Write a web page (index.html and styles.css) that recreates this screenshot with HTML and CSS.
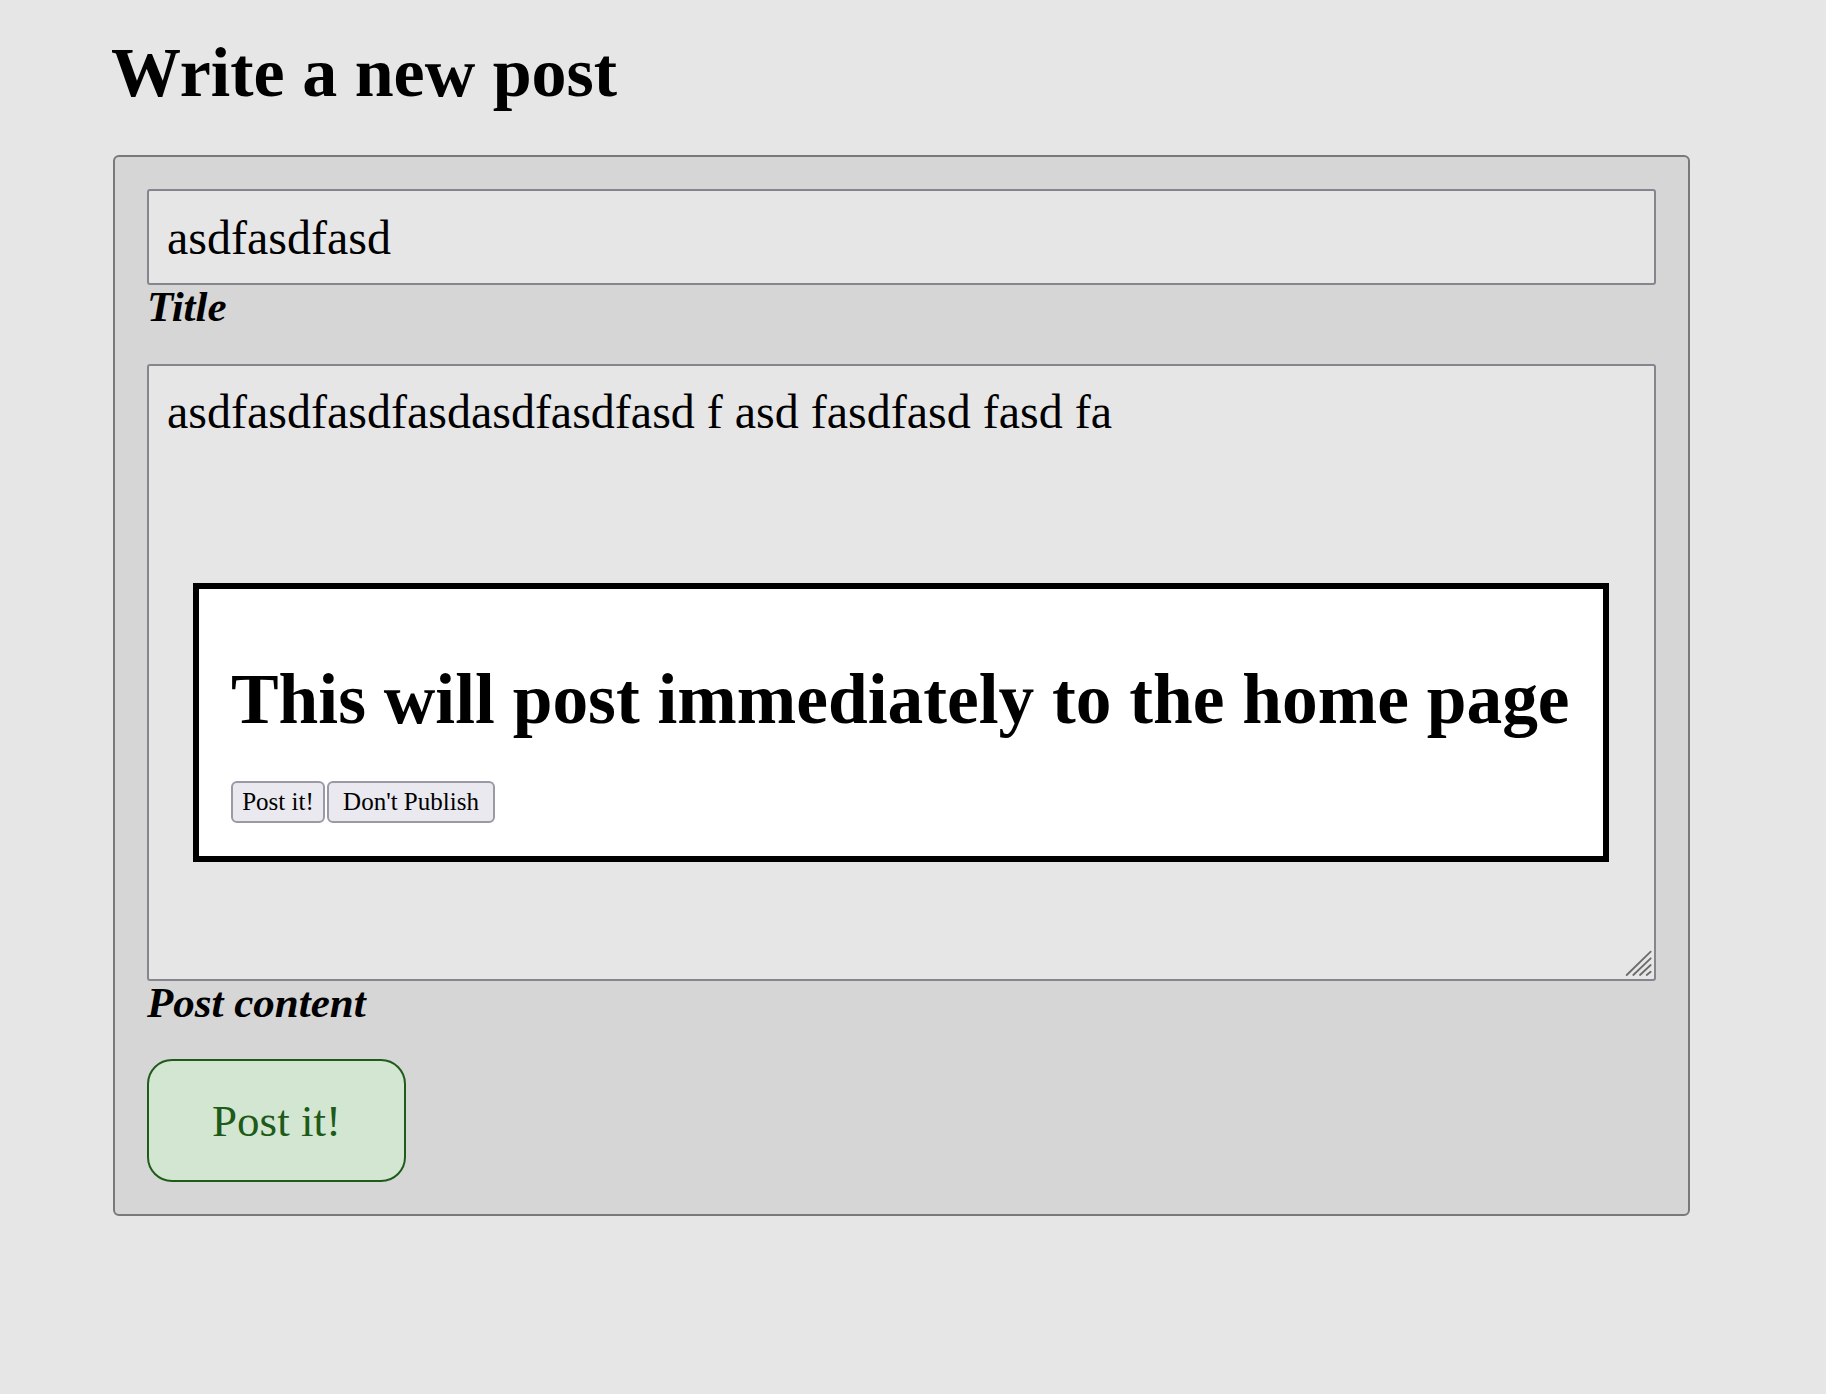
FILE: index.html
```html
<!DOCTYPE html>
<html lang="en">
<head>
<meta charset="utf-8">
<title>Write a new post</title>
<link rel="stylesheet" href="styles.css">
</head>
<body>
<main class="page">
  <h1 class="page-title">Write a new post</h1>
  <form class="post-form">
    <div class="field">
      <input class="title-input" type="text" value="asdfasdfasd">
      <label class="field-label">Title</label>
    </div>
    <div class="field field-content">
      <div class="textarea-wrap">
        <textarea class="content-input">asdfasdfasdfasdasdfasdfasd f asd fasdfasd fasd fa</textarea>
        <svg class="grip" width="28" height="28" viewBox="0 0 28 28" aria-hidden="true">
          <g stroke="#6b6b6b" stroke-width="1.8" stroke-linecap="round">
            <line x1="2.7" y1="25" x2="26.7" y2="1.7"/>
            <line x1="9.3" y1="25" x2="26.7" y2="8.3"/>
            <line x1="16" y1="25" x2="26.7" y2="15"/>
            <line x1="22.7" y1="25" x2="26.7" y2="21.7"/>
          </g>
        </svg>
      </div>
      <label class="field-label">Post content</label>
    </div>
    <button class="submit" type="button">Post it!</button>
  </form>
</main>
<div class="confirm-dialog">
  <h2 class="confirm-title">This will post immediately to the home page</h2>
  <div class="confirm-actions">
    <button class="small-btn btn-post" type="button">Post it!</button>
    <button class="small-btn btn-cancel" type="button">Don't Publish</button>
  </div>
</div>
</body>
</html>
```
FILE: styles.css
```css
html, body {
  margin: 0;
  padding: 0;
}
body {
  background: #e6e6e6;
  font-family: "Liberation Serif", "Times New Roman", serif;
  color: #000;
}
.page {
  padding: 33px 0 0 113px;
}
.page-title {
  margin: 0 0 42px -2px;
  font-size: 70px;
  line-height: 80px;
  font-weight: bold;
}
.post-form {
  box-sizing: border-box;
  width: 1577px;
  background: #d6d6d6;
  border: 2px solid #797979;
  border-radius: 6px;
  padding: 32px;
  display: flex;
  flex-direction: column;
  align-items: flex-start;
}
.field {
  width: 100%;
  display: flex;
  flex-direction: column;
}
.field-content {
  margin-top: 33px;
}
.title-input {
  box-sizing: border-box;
  width: 100%;
  height: 96px;
  margin: 0;
  padding: 0 18px;
  border: 2px solid #85858f;
  border-radius: 3px;
  background: #e6e6e6;
  font-family: "Liberation Serif", "Times New Roman", serif;
  font-size: 48px;
  color: #000;
  outline: none;
}
.textarea-wrap {
  position: relative;
  width: 100%;
  display: flex;
}
.content-input {
  box-sizing: border-box;
  width: 100%;
  height: 617px;
  margin: 0;
  padding: 18px;
  border: 2px solid #85858f;
  border-radius: 3px;
  background: #e6e6e6;
  font-family: "Liberation Serif", "Times New Roman", serif;
  font-size: 48px;
  color: #000;
  resize: none;
  outline: none;
}
.grip {
  position: absolute;
  right: 4px;
  bottom: 3px;
}
.field-label {
  display: block;
  margin-top: -2px;
  font-size: 43px;
  line-height: 48px;
  font-weight: bold;
  font-style: italic;
}
.submit {
  box-sizing: border-box;
  margin-top: 32px;
  width: 259px;
  height: 123px;
  padding: 0;
  border: 2px solid #1f5c1a;
  border-radius: 25px;
  background: #d2e6d2;
  color: #1e5a18;
  font-family: "Liberation Serif", "Times New Roman", serif;
  font-size: 45px;
  cursor: pointer;
}
.confirm-dialog {
  position: absolute;
  left: 193px;
  top: 583px;
  box-sizing: border-box;
  width: 1416px;
  height: 279px;
  border: 6px solid #000;
  background: #fff;
  padding: 70px 32px 0;
}
.confirm-title {
  margin: 0 0 42px;
  font-size: 71.4px;
  line-height: 80px;
  font-weight: bold;
  white-space: nowrap;
}
.confirm-actions {
  display: flex;
  gap: 2px;
}
.small-btn {
  box-sizing: border-box;
  height: 42px;
  margin: 0;
  border: 2px solid #9a9aa6;
  border-radius: 6px;
  background: #e9e9ef;
  color: #000;
  font-family: "Liberation Serif", "Times New Roman", serif;
  font-size: 25px;
  line-height: 36px;
  padding: 0;
  text-align: center;
}
.btn-post {
  width: 94px;
}
.btn-cancel {
  width: 168px;
}
```
